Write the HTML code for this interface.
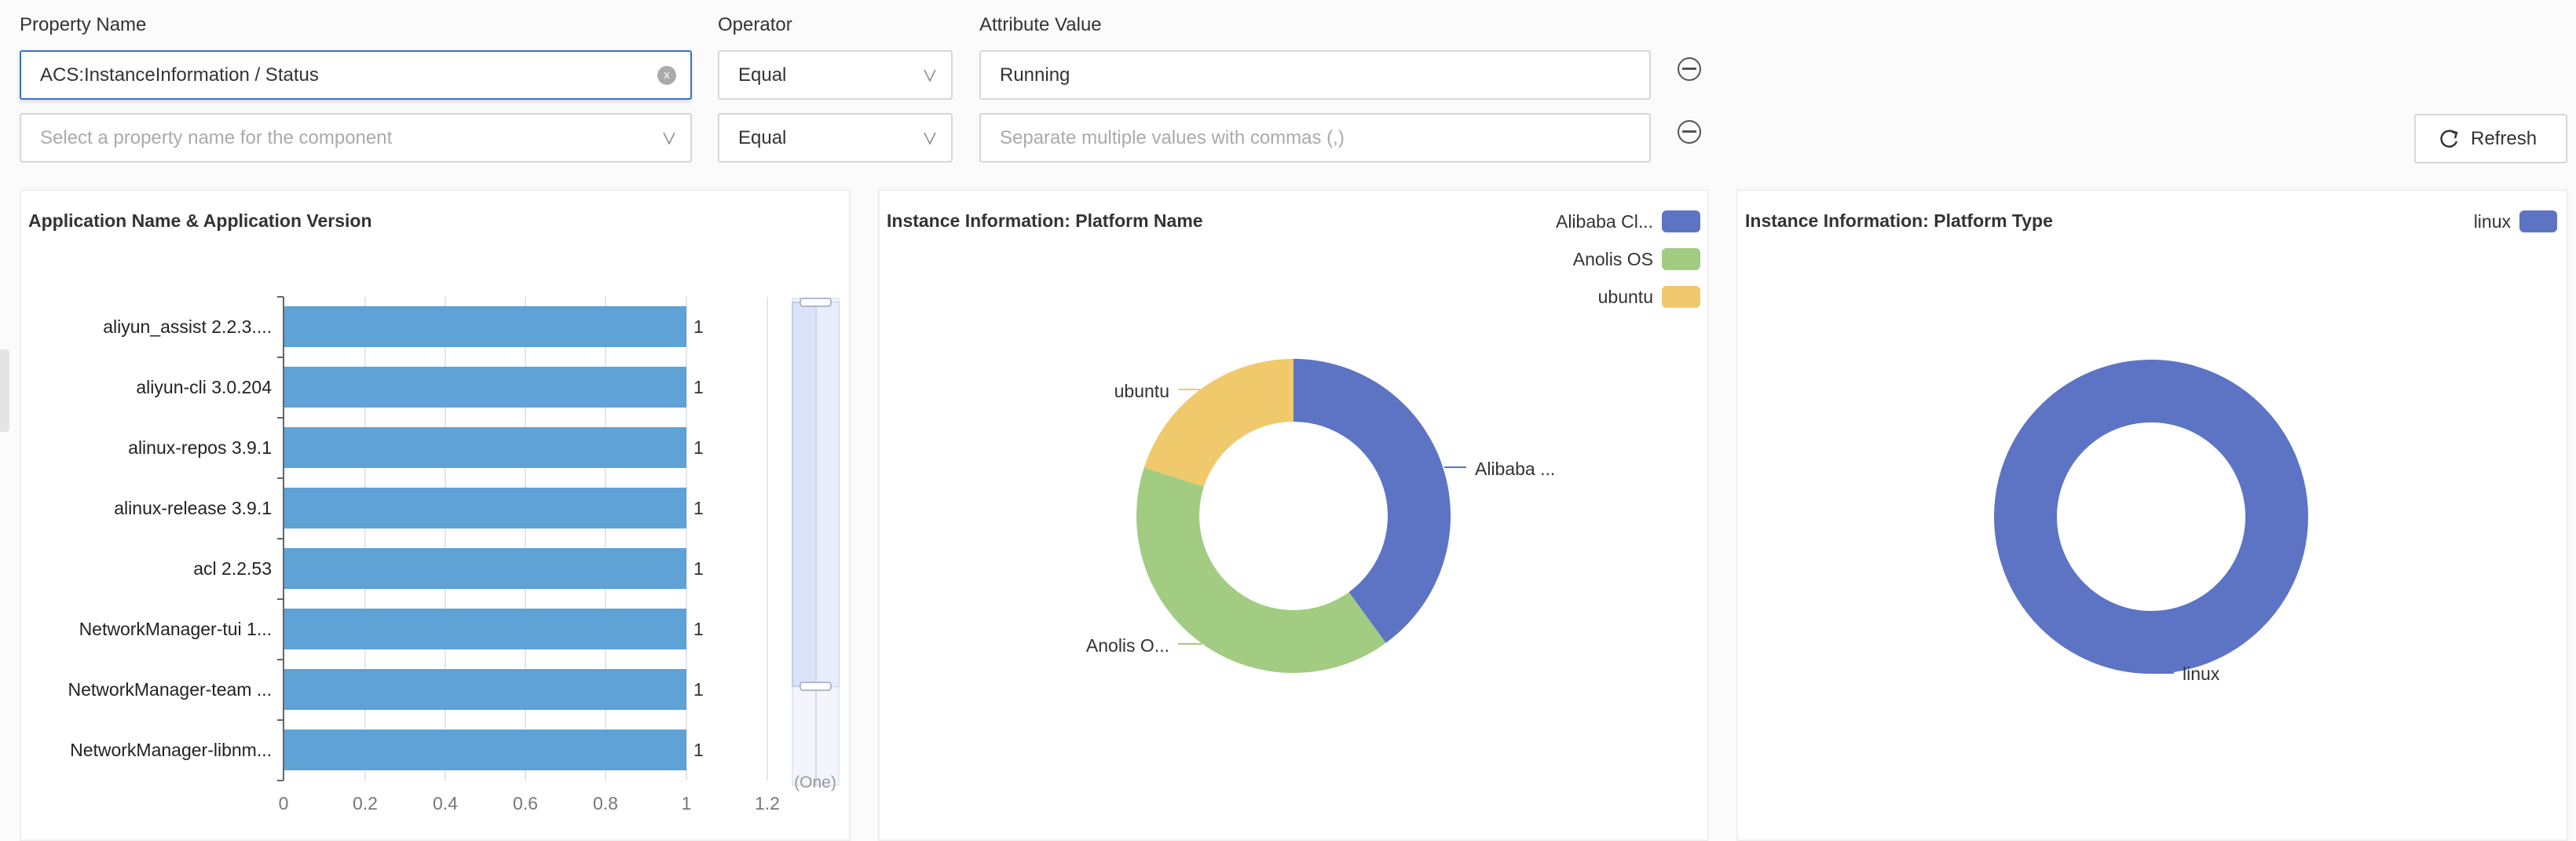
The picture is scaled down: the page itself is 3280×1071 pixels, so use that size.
<!DOCTYPE html>
<html><head><meta charset="utf-8"><style>
*{box-sizing:border-box;margin:0;padding:0}
body{width:3280px;height:1052px;overflow:hidden;background:#fbfbfb;font-family:"Liberation Sans",sans-serif;position:relative;color:#333}
.a{position:absolute}
.lbl{font-size:24px;color:#333;top:18px}
.box{position:absolute;border:2px solid #d7d7d7;border-radius:3px;background:#fff;height:63px;font-size:24px;line-height:59px;padding-left:24px;color:#333}
.ph{color:#aaa}
.card{position:absolute;top:241px;height:830px;background:#fff;border:2px solid #efefef}
.chev{position:absolute;right:18px;top:18px}
.minus{position:absolute;width:30px;height:30px;border:2.5px solid #555;border-radius:50%}
.minus:after{content:"";position:absolute;left:4px;right:4px;top:11px;height:3px;background:#555}
</style></head><body>
<div class="a lbl" style="left:25px">Property Name</div>
<div class="a lbl" style="left:914px">Operator</div>
<div class="a lbl" style="left:1247px">Attribute Value</div>

<div class="box" style="left:25px;top:64px;width:856px;border-color:#3a6fd0;box-shadow:0 3px 6px rgba(0,0,0,.12)">ACS:InstanceInformation / Status
<div class="a" style="right:18px;top:18px;width:24px;height:24px;border-radius:50%;background:#aaa;color:#fff;font-size:15px;line-height:24px;text-align:center">x</div></div>
<div class="box ph" style="left:25px;top:144px;width:856px">Select a property name for the component
<svg class="chev" width="18" height="24"><path d="M2 5 L9 19 L16 5" fill="none" stroke="#888" stroke-width="1.5"/></svg></div>

<div class="box" style="left:914px;top:64px;width:299px">Equal<svg class="chev" width="18" height="24"><path d="M2 5 L9 19 L16 5" fill="none" stroke="#888" stroke-width="1.5"/></svg></div>
<div class="box" style="left:914px;top:144px;width:299px">Equal<svg class="chev" width="18" height="24"><path d="M2 5 L9 19 L16 5" fill="none" stroke="#888" stroke-width="1.5"/></svg></div>

<div class="box" style="left:1247px;top:64px;width:855px">Running</div>
<div class="box ph" style="left:1247px;top:144px;width:855px">Separate multiple values with commas (,)</div>

<div class="minus" style="left:2136px;top:73px"></div>
<div class="minus" style="left:2136px;top:153px"></div>

<div class="box" style="left:3074px;top:145px;width:195px;padding-left:30px;font-size:24px">
<svg class="a" style="left:30px;top:17px" width="26" height="28"><path d="M20 6 A10 10 0 1 0 22 16" fill="none" stroke="#333" stroke-width="2.5"/><path d="M15 3 L22 5 L20 12" fill="none" stroke="#333" stroke-width="2.5"/></svg>
<span style="margin-left:40px">Refresh</span></div>

<div class="a" style="left:0;top:445px;width:12px;height:105px;background:#e4e4e4;border-radius:0 4px 4px 0"></div>

<div class="card" style="left:25px;width:1058px"></div>
<div class="card" style="left:1118px;width:1058px"></div>
<div class="card" style="left:2211px;width:1059px"></div>

<svg class="a" style="left:0;top:0" width="3280" height="1052" font-family="Liberation Sans, sans-serif">
<g font-size="23" font-weight="bold" fill="#333">
<text x="36" y="289">Application Name &amp; Application Version</text>
<text x="1129" y="289">Instance Information: Platform Name</text>
<text x="2222" y="289">Instance Information: Platform Type</text>
</g>
<g stroke="#e3e6f0" stroke-width="2">
<line x1="465" y1="378" x2="465" y2="994"/><line x1="567" y1="378" x2="567" y2="994"/>
<line x1="669" y1="378" x2="669" y2="994"/><line x1="771" y1="378" x2="771" y2="994"/>
<line x1="874" y1="378" x2="874" y2="994"/><line x1="977" y1="378" x2="977" y2="994"/>
</g>
<g fill="#5ea2d6">
<rect x="361" y="390" width="513" height="52"/><rect x="361" y="467" width="513" height="52"/>
<rect x="361" y="544" width="513" height="52"/><rect x="361" y="621" width="513" height="52"/>
<rect x="361" y="698" width="513" height="52"/><rect x="361" y="775" width="513" height="52"/>
<rect x="361" y="852" width="513" height="52"/><rect x="361" y="929" width="513" height="52"/>
</g>
<g stroke="#666" stroke-width="2">
<line x1="361" y1="378" x2="361" y2="994"/>
<line x1="353" y1="378" x2="361" y2="378"/><line x1="353" y1="455" x2="361" y2="455"/><line x1="353" y1="532" x2="361" y2="532"/><line x1="353" y1="609" x2="361" y2="609"/><line x1="353" y1="686" x2="361" y2="686"/><line x1="353" y1="763" x2="361" y2="763"/><line x1="353" y1="840" x2="361" y2="840"/><line x1="353" y1="917" x2="361" y2="917"/><line x1="353" y1="994" x2="361" y2="994"/>
</g>
<g font-size="23" fill="#222" text-anchor="end">
<text x="346" y="424">aliyun_assist 2.2.3....</text>
<text x="346" y="501">aliyun-cli 3.0.204</text>
<text x="346" y="578">alinux-repos 3.9.1</text>
<text x="346" y="655">alinux-release 3.9.1</text>
<text x="346" y="732">acl 2.2.53</text>
<text x="346" y="809">NetworkManager-tui 1...</text>
<text x="346" y="886">NetworkManager-team ...</text>
<text x="346" y="963">NetworkManager-libnm...</text>
</g>
<g font-size="23" fill="#333">
<text x="883" y="424">1</text><text x="883" y="501">1</text><text x="883" y="578">1</text><text x="883" y="655">1</text><text x="883" y="732">1</text><text x="883" y="809">1</text><text x="883" y="886">1</text><text x="883" y="963">1</text>
</g>
<g font-size="23" fill="#777" text-anchor="middle">
<text x="361" y="1031">0</text><text x="465" y="1031">0.2</text><text x="567" y="1031">0.4</text><text x="669" y="1031">0.6</text><text x="771" y="1031">0.8</text><text x="874" y="1031">1</text><text x="977" y="1031">1.2</text>
</g>
<rect x="1009" y="380" width="59" height="620" fill="#f3f5fb" stroke="#dfe3ef" stroke-width="1.5"/>
<rect x="1009" y="385" width="59" height="489" fill="#dbe3f8" stroke="#b8c4e6" stroke-width="1.5"/>
<rect x="1039" y="385" width="29" height="489" fill="#e8edfb"/>
<line x1="1039" y1="385" x2="1039" y2="1000" stroke="#c8d0ea" stroke-width="1.5"/>
<rect x="1019" y="380" width="39" height="10" rx="3" fill="#fff" stroke="#9aa6c8" stroke-width="1.5"/>
<rect x="1019" y="869" width="39" height="10" rx="3" fill="#fff" stroke="#9aa6c8" stroke-width="1.5"/>
<text x="1038" y="1003" font-size="21" fill="#999" text-anchor="middle">(One)</text>
<path d="M1647,457 A200,200 0 0 1 1764.6,818.8 L1717.5,754.1 A120,120 0 0 0 1647,537 Z" fill="#5d74c4"/>
<path d="M1764.6,818.8 A200,200 0 0 1 1456.8,595.2 L1532.9,619.9 A120,120 0 0 0 1717.5,754.1 Z" fill="#a1cc82"/>
<path d="M1456.8,595.2 A200,200 0 0 1 1647,457 L1647,537 A120,120 0 0 0 1532.9,619.9 Z" fill="#f0c96c"/>
<line x1="1839" y1="595" x2="1867" y2="595" stroke="#5d74c4" stroke-width="2"/>
<line x1="1500" y1="496" x2="1528" y2="496" stroke="#f0c96c" stroke-width="2"/>
<line x1="1500" y1="820" x2="1530" y2="820" stroke="#a1cc82" stroke-width="2"/>
<g font-size="23" fill="#333">
<text x="1878" y="605">Alibaba ...</text>
<text x="1489" y="506" text-anchor="end">ubuntu</text>
<text x="1489" y="830" text-anchor="end">Anolis O...</text>
</g>
<rect x="2116" y="268" width="49" height="28" rx="6" fill="#5d74c4"/>
<rect x="2116" y="316" width="49" height="28" rx="6" fill="#a1cc82"/>
<rect x="2116" y="364" width="49" height="28" rx="6" fill="#f0c96c"/>
<g font-size="23" fill="#333" text-anchor="end">
<text x="2105" y="290">Alibaba Cl...</text>
<text x="2105" y="338">Anolis OS</text>
<text x="2105" y="386">ubuntu</text>
</g>
<circle cx="2739" cy="658" r="160" fill="none" stroke="#5d74c4" stroke-width="80"/>
<line x1="2738" y1="857" x2="2768" y2="857" stroke="#5d74c4" stroke-width="2"/>
<text x="2779" y="866" font-size="23" fill="#333">linux</text>
<rect x="3208" y="268" width="48" height="28" rx="6" fill="#5d74c4"/>
<text x="3197" y="290" font-size="23" fill="#333" text-anchor="end">linux</text>
</svg>
</body></html>
